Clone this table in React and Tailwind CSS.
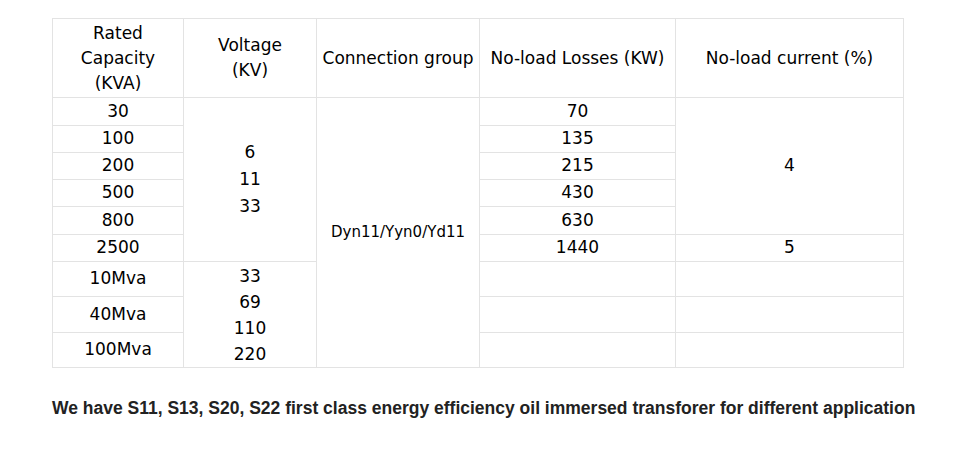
import React from 'react';

const rows = [
  { kva: '30', loss: '70', h: 'h-[28px]' },
  { kva: '100', loss: '135', h: 'h-[27px]' },
  { kva: '200', loss: '215', h: 'h-[27px]' },
  { kva: '500', loss: '430', h: 'h-[27px]' },
  { kva: '800', loss: '630', h: 'h-[28px]' },
  { kva: '2500', loss: '1440', h: 'h-[27px]' },
];

const cell = 'border border-[#e3e3e3] text-center align-middle p-0';

export default function App() {
  return (
    <div className="bg-white w-[975px] h-[458px] pt-[18px] pl-[52px]" style={{ fontFamily: '"DejaVu Sans", Verdana, sans-serif' }}>
      <table className="border-collapse text-[17px] text-black table-fixed w-[851px]">
        <colgroup>
          <col className="w-[131px]" />
          <col className="w-[133px]" />
          <col className="w-[163px]" />
          <col className="w-[196px]" />
          <col className="w-[228px]" />
        </colgroup>
        <tbody>
          <tr className="h-[79px] leading-[25px]">
            <td className={cell}>Rated<br />Capacity<br />(KVA)</td>
            <td className={cell}>Voltage<br />(KV)</td>
            <td className={cell}>Connection group</td>
            <td className={cell}>No-load Losses (KW)</td>
            <td className={cell}>No-load current (%)</td>
          </tr>
          {rows.map((r, i) => (
            <tr key={r.kva} className={r.h}>
              <td className={cell}>{r.kva}</td>
              {i === 0 && (
                <td className={cell + ' leading-[27px]'} rowSpan={6}>6<br />11<br />33</td>
              )}
              {i === 0 && (
                <td className={cell + ' text-[15px]'} rowSpan={9}>Dyn11/Yyn0/Yd11</td>
              )}
              <td className={cell}>{r.loss}</td>
              {i === 0 && <td className={cell} rowSpan={5}>4</td>}
              {i === 5 && <td className={cell}>5</td>}
            </tr>
          ))}
          <tr className="h-[35px]">
            <td className={cell}>10Mva</td>
            <td className={cell + ' leading-[26px]'} rowSpan={3}>33<br />69<br />110<br />220</td>
            <td className={cell}></td>
            <td className={cell}></td>
          </tr>
          <tr className="h-[36px]">
            <td className={cell}>40Mva</td>
            <td className={cell}></td>
            <td className={cell}></td>
          </tr>
          <tr className="h-[35px]">
            <td className={cell}>100Mva</td>
            <td className={cell}></td>
            <td className={cell}></td>
          </tr>
        </tbody>
      </table>
      <p className="mt-[27px] text-[17.5px] font-bold text-[#222]" style={{ fontFamily: '"Liberation Sans", Arial, sans-serif' }}>
        We have S11, S13, S20, S22 first class energy efficiency oil immersed transforer for different application
      </p>
    </div>
  );
}
